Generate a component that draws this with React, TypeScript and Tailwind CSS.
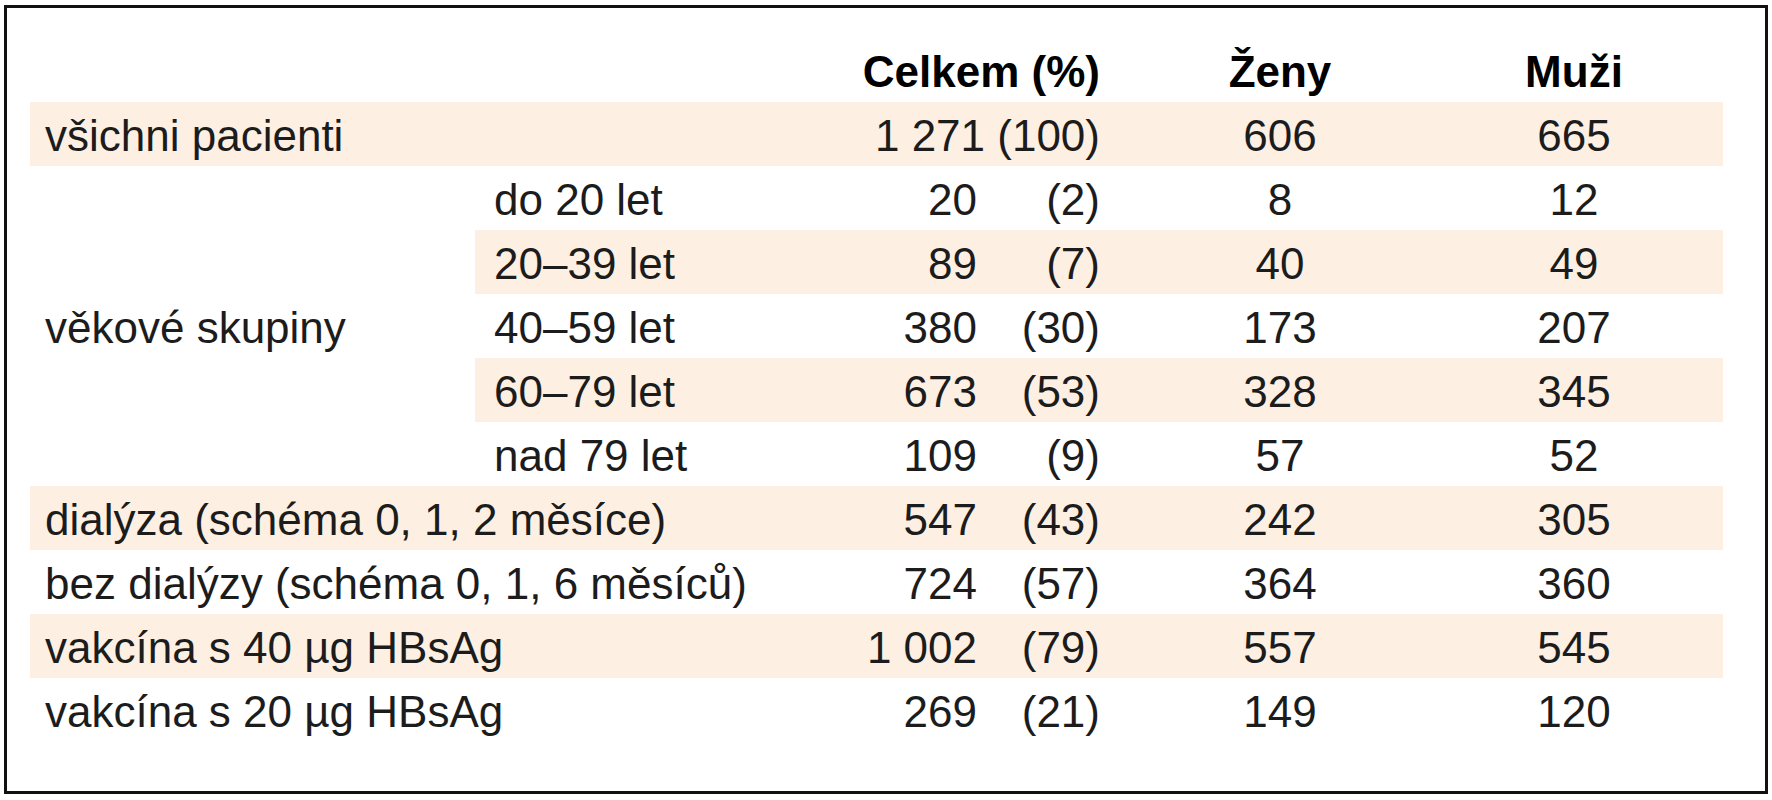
/**
 * Vaccination cohort table — patients by age group, dialysis regime and
 * vaccine dose, split into totals (with share in %), women and men.
 *
 * Shaded rows alternate on a warm peach tint; the age-group label spans
 * its five sub-rows and sits centred against them.
 */

const BAND = 'bg-[#fdf0e3]';

type Row = {
  label: string;
  total: string;
  pct: string;
  women: string;
  men: string;
  shaded?: boolean;
};

const AGE_ROWS: Row[] = [
  { label: 'do 20 let', total: '20', pct: '(2)', women: '8', men: '12' },
  { label: '20–39 let', total: '89', pct: '(7)', women: '40', men: '49', shaded: true },
  { label: '40–59 let', total: '380', pct: '(30)', women: '173', men: '207' },
  { label: '60–79 let', total: '673', pct: '(53)', women: '328', men: '345', shaded: true },
  { label: 'nad 79 let', total: '109', pct: '(9)', women: '57', men: '52' },
];

const TAIL_ROWS: Row[] = [
  { label: 'dialýza (schéma 0, 1, 2 měsíce)', total: '547', pct: '(43)', women: '242', men: '305', shaded: true },
  { label: 'bez dialýzy (schéma 0, 1, 6 měsíců)', total: '724', pct: '(57)', women: '364', men: '360' },
  { label: 'vakcína s 40 µg HBsAg', total: '1 002', pct: '(79)', women: '557', men: '545', shaded: true },
  { label: 'vakcína s 20 µg HBsAg', total: '269', pct: '(21)', women: '149', men: '120' },
];

const cell = 'p-0 pt-[3px] leading-[61px] whitespace-nowrap';

export default function App() {
  return (
    <div className="min-h-[800px] bg-white pt-[5px] pl-[4px]">
      <div
        className="w-[1764px] h-[789px] border-[3px] border-[#111] pt-[30px] pl-[23px] text-[44px] text-[#1c1c1c]"
        style={{ fontFamily: '"Liberation Sans", Arial, sans-serif' }}
      >
        <table className="table-fixed border-collapse w-[1693px]">
          <colgroup>
            <col className="w-[445px]" />
            <col className="w-[385px]" />
            <col className="w-[117px]" />
            <col className="w-[123px]" />
            <col className="w-[360px]" />
            <col className="w-[228px]" />
            <col className="w-[35px]" />
          </colgroup>
          <thead>
            <tr className="font-bold text-black">
              <th className={cell} />
              <th className={cell} />
              <th colSpan={2} className={`${cell} text-right`}>
                Celkem (%)
              </th>
              <th className={`${cell} text-center`}>Ženy</th>
              <th className={`${cell} text-center`}>Muži</th>
              <th className={cell} />
            </tr>
          </thead>
          <tbody>
            {/* all patients */}
            <tr>
              <td colSpan={2} className={`${cell} ${BAND} pl-[15px]`}>
                všichni pacienti
              </td>
              <td colSpan={2} className={`${cell} ${BAND} text-right`}>
                1 271 (100)
              </td>
              <td className={`${cell} ${BAND} text-center`}>606</td>
              <td className={`${cell} ${BAND} text-center`}>665</td>
              <td className={`${cell} ${BAND}`} />
            </tr>

            {/* age groups */}
            {AGE_ROWS.map((r, i) => {
              const bg = r.shaded ? BAND : '';
              return (
                <tr key={r.label}>
                  {i === 0 ? (
                    <td rowSpan={AGE_ROWS.length} className={`${cell} align-middle pl-[15px]`}>
                      věkové skupiny
                    </td>
                  ) : null}
                  <td className={`${cell} ${bg} pl-[19px]`}>{r.label}</td>
                  <td className={`${cell} ${bg} text-right`}>{r.total}</td>
                  <td className={`${cell} ${bg} text-right`}>{r.pct}</td>
                  <td className={`${cell} ${bg} text-center`}>{r.women}</td>
                  <td className={`${cell} ${bg} text-center`}>{r.men}</td>
                  <td className={`${cell} ${bg}`} />
                </tr>
              );
            })}

            {/* dialysis + vaccine dose */}
            {TAIL_ROWS.map((r) => {
              const bg = r.shaded ? BAND : '';
              return (
                <tr key={r.label}>
                  <td colSpan={2} className={`${cell} ${bg} pl-[15px]`}>
                    {r.label}
                  </td>
                  <td className={`${cell} ${bg} text-right`}>{r.total}</td>
                  <td className={`${cell} ${bg} text-right`}>{r.pct}</td>
                  <td className={`${cell} ${bg} text-center`}>{r.women}</td>
                  <td className={`${cell} ${bg} text-center`}>{r.men}</td>
                  <td className={`${cell} ${bg}`} />
                </tr>
              );
            })}
          </tbody>
        </table>
      </div>
    </div>
  );
}
